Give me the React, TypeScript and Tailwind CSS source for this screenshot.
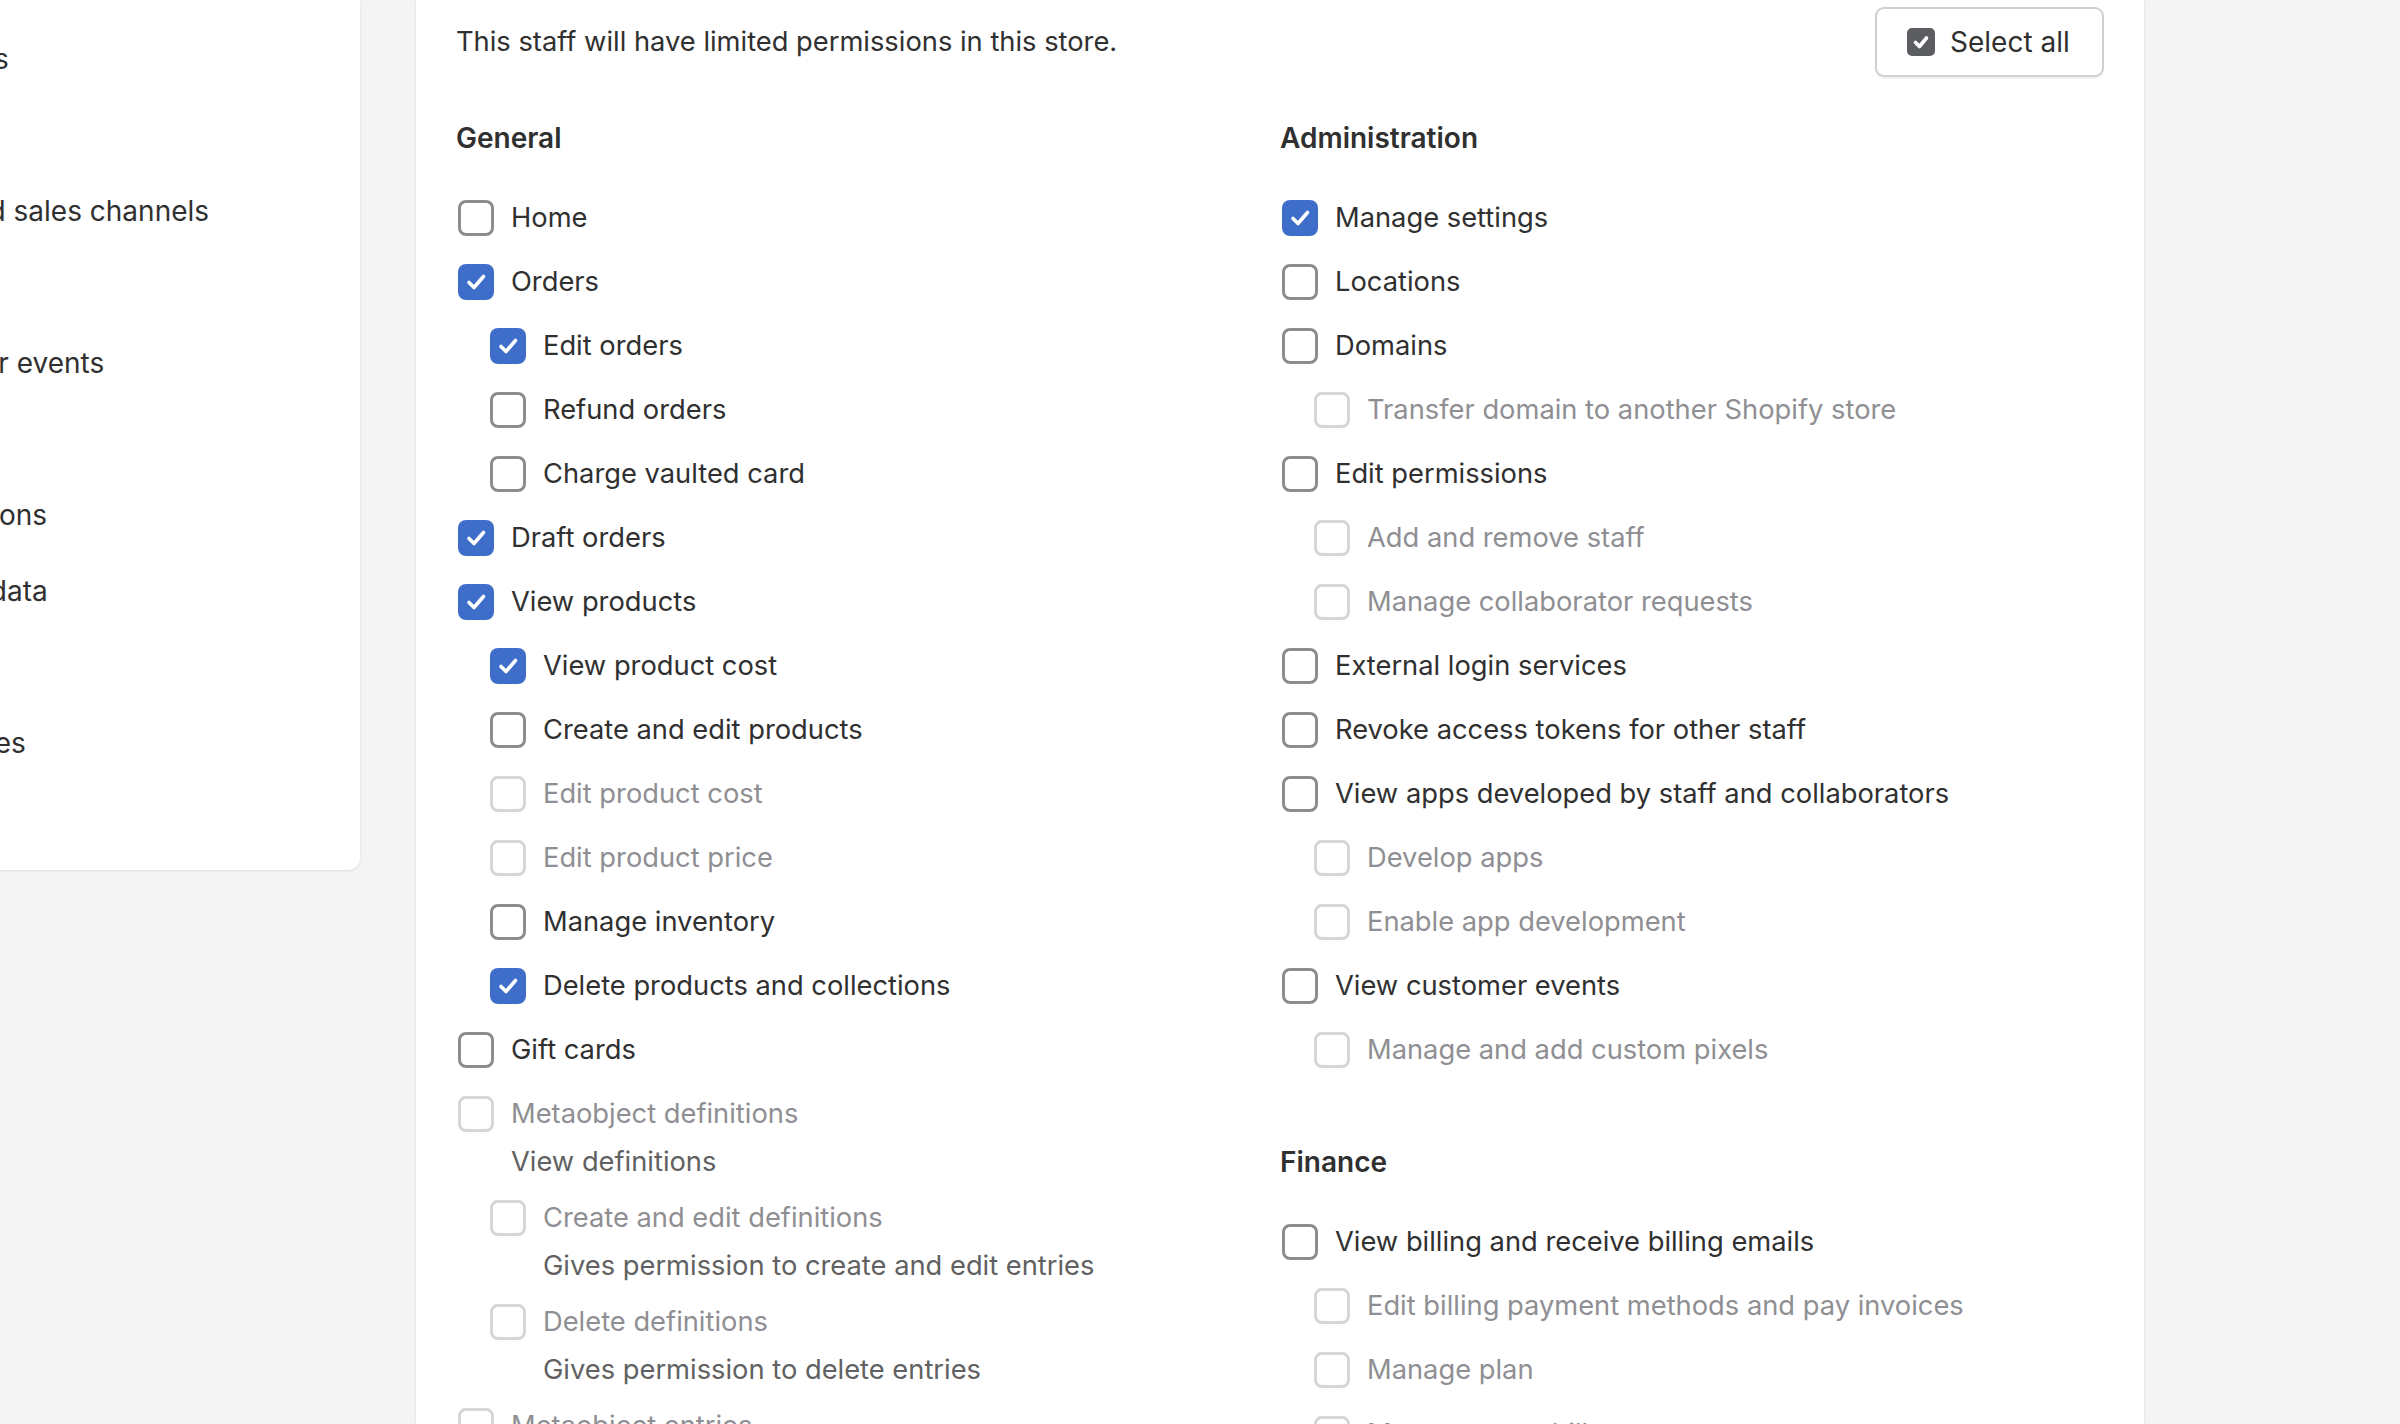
import React from "react";

type Item = {
  label: string;
  checked?: boolean;
  disabled?: boolean;
  indent?: boolean;
  desc?: string;
};

const general: Item[] = [
  { label: "Home" },
  { label: "Orders", checked: true },
  { label: "Edit orders", checked: true, indent: true },
  { label: "Refund orders", indent: true },
  { label: "Charge vaulted card", indent: true },
  { label: "Draft orders", checked: true },
  { label: "View products", checked: true },
  { label: "View product cost", checked: true, indent: true },
  { label: "Create and edit products", indent: true },
  { label: "Edit product cost", indent: true, disabled: true },
  { label: "Edit product price", indent: true, disabled: true },
  { label: "Manage inventory", indent: true },
  { label: "Delete products and collections", indent: true, checked: true },
  { label: "Gift cards" },
  { label: "Metaobject definitions", disabled: true, desc: "View definitions" },
  {
    label: "Create and edit definitions",
    indent: true,
    disabled: true,
    desc: "Gives permission to create and edit entries",
  },
  {
    label: "Delete definitions",
    indent: true,
    disabled: true,
    desc: "Gives permission to delete entries",
  },
  { label: "Metaobject entries", disabled: true },
];

const admin: Item[] = [
  { label: "Manage settings", checked: true },
  { label: "Locations" },
  { label: "Domains" },
  { label: "Transfer domain to another Shopify store", indent: true, disabled: true },
  { label: "Edit permissions" },
  { label: "Add and remove staff", indent: true, disabled: true },
  { label: "Manage collaborator requests", indent: true, disabled: true },
  { label: "External login services" },
  { label: "Revoke access tokens for other staff" },
  { label: "View apps developed by staff and collaborators" },
  { label: "Develop apps", indent: true, disabled: true },
  { label: "Enable app development", indent: true, disabled: true },
  { label: "View customer events" },
  { label: "Manage and add custom pixels", indent: true, disabled: true },
];

const finance: Item[] = [
  { label: "View billing and receive billing emails" },
  { label: "Edit billing payment methods and pay invoices", indent: true, disabled: true },
  { label: "Manage plan", indent: true, disabled: true },
  { label: "Manage store bills", indent: true, disabled: true },
];

const sidebar = [
  "Locations",
  "Markets",
  "Apps and sales channels",
  "Domains",
  "Customer events",
  "Brand",
  "Notifications",
  "Custom data",
  "Billing",
  "Languages",
];

function Checkbox({ checked, disabled }: { checked?: boolean; disabled?: boolean }) {
  if (checked) {
    return (
      <span className="ml-[2px] flex h-[36px] w-[36px] shrink-0 items-center justify-center rounded-[8px] bg-[#3e6ec9]">
        <svg width="36" height="36" viewBox="0 0 36 36" fill="none">
          <polyline
            points="11,18.5 16,23.5 25.5,12.5"
            stroke="white"
            strokeWidth="3.6"
            strokeLinecap="round"
            strokeLinejoin="round"
          />
        </svg>
      </span>
    );
  }
  return (
    <span
      className={
        disabled
          ? "ml-[2px] block h-[36px] w-[36px] shrink-0 rounded-[8px] border-[3px] border-[#d6d6d8] bg-white"
          : "ml-[2px] block h-[36px] w-[36px] shrink-0 rounded-[8px] border-[3px] border-[#8c8d91] bg-white"
      }
    />
  );
}

function Row({ item }: { item: Item }) {
  return (
    <div className={item.indent ? "pl-[32px]" : ""}>
      <div className="flex h-[40px] items-center gap-[17px]">
        <Checkbox checked={item.checked} disabled={item.disabled} />
        <span
          className={
            item.disabled
              ? "whitespace-nowrap text-[27.3px] leading-[40px] text-[#8f8f93]"
              : "whitespace-nowrap text-[27.3px] leading-[40px] text-[#303030]"
          }
        >
          {item.label}
        </span>
      </div>
      {item.desc && (
        <div className="mt-[16px] whitespace-nowrap pl-[55px] text-[27.3px] leading-[24px] text-[#616161]">
          {item.desc}
        </div>
      )}
    </div>
  );
}

function Section({ title, items, className }: { title: string; items: Item[]; className?: string }) {
  return (
    <div className={className}>
      <h2 className="text-[28px] font-semibold leading-[40px] text-[#303030]">{title}</h2>
      <div className="mt-[40px] flex flex-col gap-[24px]">
        {items.map((it) => (
          <Row key={it.label} item={it} />
        ))}
      </div>
    </div>
  );
}

export default function App() {
  return (
    <div className="flex h-[1424px] w-[2400px] overflow-hidden bg-[#f4f4f4] font-[Inter,ui-sans-serif,sans-serif] text-[#303030]">
      <aside className="-ml-[200px] h-[870px] w-[560px] shrink-0 rounded-br-[12px] bg-white pl-[80px] pt-[21px] shadow-[0_1px_3px_rgba(0,0,0,0.10)]">
        {sidebar.map((s) => (
          <div key={s} className="flex h-[76px] items-center whitespace-nowrap text-[28px] text-[#303030]">
            {s}
          </div>
        ))}
      </aside>
      <main className="ml-[56px] h-[1424px] w-[1728px] shrink-0 bg-white px-[40px] pt-[7px] shadow-[0_0_3px_rgba(0,0,0,0.10)]">
        <div className="flex h-[70px] items-center justify-between">
          <p className="text-[27.3px] leading-[40px] text-[#303030]">
            This staff will have limited permissions in this store.
          </p>
          <button className="flex h-[70px] w-[229px] items-center gap-[15px] rounded-[9px] border-[2px] border-[#cfd0d3] bg-white pl-[30px] shadow-[0_2px_1px_rgba(0,0,0,0.06)]">
            <span className="flex h-[28px] w-[28px] items-center justify-center rounded-[5px] bg-[#5c5d61]">
              <svg width="28" height="28" viewBox="0 0 28 28" fill="none">
                <polyline
                  points="8.5,14.5 12.5,18.5 19.5,10"
                  stroke="white"
                  strokeWidth="3.6"
                  strokeLinecap="round"
                  strokeLinejoin="round"
                />
              </svg>
            </span>
            <span className="text-[28px] leading-[40px] text-[#303030]">Select all</span>
          </button>
        </div>
        <div className="mt-[41px] grid grid-cols-2">
          <Section title="General" items={general} />
          <div>
            <Section title="Administration" items={admin} />
            <Section title="Finance" items={finance} className="mt-[72px]" />
          </div>
        </div>
      </main>
    </div>
  );
}
